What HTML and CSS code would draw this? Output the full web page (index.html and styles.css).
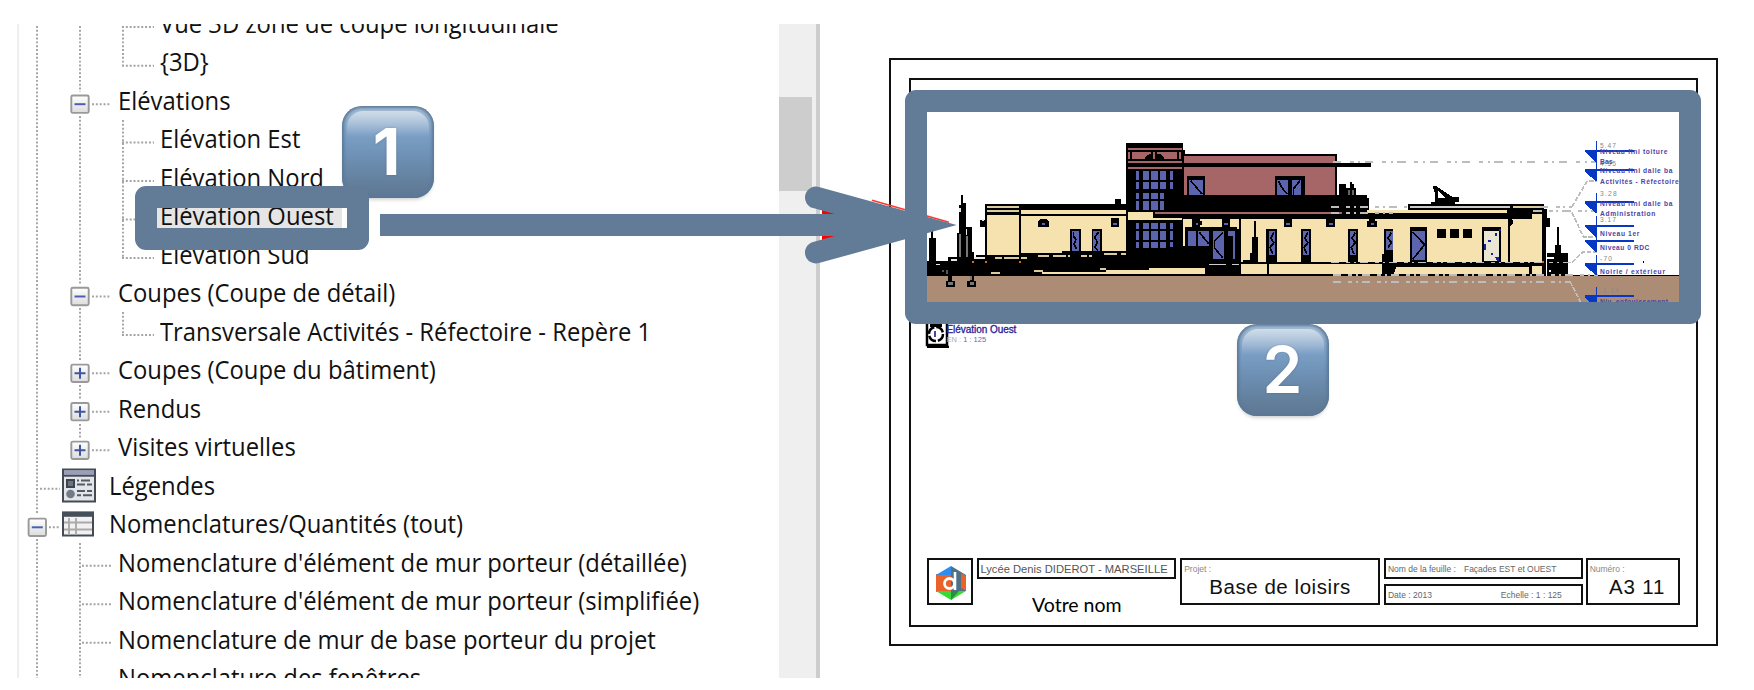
FILE: index.html
```
<!DOCTYPE html>
<html lang="fr">
<head>
<meta charset="utf-8">
<title>Mise en feuille d'une élévation</title>
<link rel="stylesheet" href="styles.css">
</head>
<body>
<main class="stage">
  <section class="browser">
    <svg class="guides" width="763" height="654" viewBox="17 24 763 654">
      <defs>
        <linearGradient id="boxFill" x1="0" y1="0" x2="0" y2="1"><stop offset="0" stop-color="#fff"/><stop offset="1" stop-color="#dcdcdc"/></linearGradient>
        <g id="box"><rect x="-8.7" y="-8.7" width="17.4" height="17.4" rx="1.5" fill="url(#boxFill)" stroke="#999" stroke-width="1.9"/></g>
        <g id="minus"><use href="#box"/><path d="M-5.5 0h11" stroke="#4a62ae" stroke-width="2"/></g>
        <g id="plus"><use href="#box"/><path d="M-5.5 0h11M0-5.5v11" stroke="#3f56a0" stroke-width="2"/></g>
      </defs>
      <path class="dots" d="M37 26V515M37 539V678M80 26V92M80 116V284M80 308V361M80 385V400M80 424V438M80 543V678M123 26V66M123 120V258M123 312V335M122 27H154M122 65.7H154M92 104.2H111M122 142.5H154M122 181H154M122 219.5H154M122 258H154M92 296.5H111M122 335H154M92 373.3H111M92 411.7H111M92 450.3H111M40 488.8H60M49 527.3H60M82 565.7H111M82 604.2H111M82 642.7H111"/>
      <use href="#minus" x="80" y="104.2"/><use href="#minus" x="80" y="296.5"/>
      <use href="#plus" x="80" y="373.3"/><use href="#plus" x="80" y="411.7"/><use href="#plus" x="80" y="450.3"/>
      <use href="#minus" x="37.3" y="527.3"/>
      <g>
        <rect x="63" y="469.5" width="32" height="32" fill="#e2e5e9" stroke="#454b55" stroke-width="2"/>
        <path d="M64 472.8H94" stroke="#9a9fb8" stroke-width="4.4"/><path d="M63 475.8H95" stroke="#454b55" stroke-width="1.8"/>
        <rect x="67" y="480" width="7" height="7" fill="#6b7480" stroke="#3e444d" stroke-width="2"/>
        <circle cx="70.5" cy="494" r="4.3" fill="#747b86"/>
        <path d="M77 480.5h2M81 480.5h9M77 484.5h8M87 484.5h5M77 491h8M87 491h5M77 495.3h4M83 495.3h9" stroke="#555b64" stroke-width="1.9"/>
      </g>
      <g>
        <rect x="63" y="512.5" width="30" height="23" fill="#f1f1f1" stroke="#454b55" stroke-width="2"/>
        <path d="M62 514.3H94" stroke="#454f5b" stroke-width="5"/>
        <path d="M64 522.5H92M64 529.5H92M69 518V535M76 518V535" stroke="#aaa" stroke-width="1.9"/>
      </g>
    </svg>
    <ul class="tree">
      <li class="row l3"><span>Vue 3D zone de coupe longitudinale</span></li>
      <li class="row l3"><span>{3D}</span></li>
      <li class="row l2"><span>Elévations</span></li>
      <li class="row l3"><span>Elévation Est</span></li>
      <li class="row l3"><span>Elévation Nord</span></li>
      <li class="row l3 selected"><span>Elévation Ouest</span></li>
      <li class="row l3"><span>Elévation Sud</span></li>
      <li class="row l2"><span>Coupes (Coupe de détail)</span></li>
      <li class="row l3"><span>Transversale Activités - Réfectoire - Repère 1</span></li>
      <li class="row l2"><span>Coupes (Coupe du bâtiment)</span></li>
      <li class="row l2"><span>Rendus</span></li>
      <li class="row l2"><span>Visites virtuelles</span></li>
      <li class="row l1"><span>Légendes</span></li>
      <li class="row l1"><span>Nomenclatures/Quantités (tout)</span></li>
      <li class="row l2"><span>Nomenclature d'élément de mur porteur (détaillée)</span></li>
      <li class="row l2"><span>Nomenclature d'élément de mur porteur (simplifiée)</span></li>
      <li class="row l2"><span>Nomenclature de mur de base porteur du projet</span></li>
      <li class="row l2"><span>Nomenclature des fenêtres</span></li>
    </ul>
    <div class="scrollbar"><div class="thumb"></div></div>
  </section>

  <section class="sheet">
    <div class="sheet-inner">
      <svg class="elevation" viewBox="21 -54 2256 570" shape-rendering="crispEdges">
        <rect x="21" y="438" width="2256" height="78" fill="#ad8c76"/>
        <!-- lower left wing -->
        <rect x="21" y="393" width="600" height="45"/>
        <rect x="195" y="221" width="425" height="180"/>
        <path fill="#f5e2ae" d="M201 255h96v119h-96zM303 258h314v104H425v8H303zM303 240h314v12H303z"/>
        <path fill="#dccb9c" d="M201 227h96v7h-96zM201 240h96v6h-96z"/>
        <path d="M585 208h18v15h-18zM181 270h14v20h-14zM355 290v-16l7-8h16l8 8v16zM572 290v-25h25v25zM451 298h31v70h-31zM515 298h30v70h-30z"/>
        <path fill="#5d64ae" d="M456 304h20v58h-20zM520 304h20v58h-20zM366 279h8v6h-8zM579 279h12v6h-12z"/>
        <path class="ink" d="M460 306v12l8 10-6 14 8 16M536 306l-12 16 8 14-8 16 10 10"/>
        <path fill="#dccb9c" d="M226 381h20v6h-20zM252 381h45v6h-45zM303 381h19v6h-19zM355 375h31v6h-31zM399 375h39v6h-39zM444 375h6v6h-6zM483 375h18v6h-18zM508 375h7v6h-7zM553 369h38v5h-38zM604 369h13v5h-13zM213 426h26v6h-26zM342 420h26v6h-26zM541 413h18v6h-18zM668 407h20v6h-20z"/>
        <!-- trees and footings on the left -->
        <path d="M27 393v-69h7v-20h5v20h8v69zM111 393v-83h6v-84h6v-32h6v26h8v72h18v74h6v27zM85 382h110v12H85zM168 375h30v12h-30zM84 436h13v16h7v18H78v-18h6zM149 436h12v16h7v18h-26v-18h7z"/>
        <path fill="#777" d="M117 311h6v70h-6zM137 318h7v62h-7zM85 457h14v7H85zM149 457h13v7h-13zM149 438h6v12h-6z"/>
        <path fill="#e8e8e8" d="M92 387h18v6H92zM47 401h12v5H47zM162 381h32v6h-32zM117 233h6v12h-6zM137 298h5v16h-5zM187 268h6v6h-6z"/>
        <path fill="#d96b10" d="M155 394h7v6h-7zM194 394h7v6h-7zM297 394h7v6h-7z"/>
        <path fill="#555" d="M65 419h6v8h-6zM78 420h7v12h-7z"/>
        <!-- stair tower -->
        <rect x="617" y="40" width="173" height="398"/>
        <path fill="#a66567" d="M624 54h161v6H624zM624 67h6v20h-6zM637 67h56v20h-56zM699 67h7v20h-7zM712 67h60v20h-60zM778 67h6v20h-6zM624 93h161v6H624zM624 112h161v6H624z"/>
        <path d="M676 87v-6l12-9h6v15zM712 87V72h8l12 9v6z"/>
        <path fill="#5d64ae" d="M648 124h8v26h-8zM668 124h19v26h-19zM693 124h20v26h-20zM719 124h20v26h-20zM751 124h7v26h-7zM648 156h8v20h-8zM668 156h19v20h-19zM693 156h20v20h-20zM719 156h20v20h-20zM751 156h7v20h-7zM648 189h8v18h-8zM668 189h19v18h-19zM693 189h20v18h-20zM719 189h14v18h-14zM648 214h8v25h-8zM668 214h19v25h-19zM693 214h20v25h-20zM719 214h14v25h-14z"/>
        <g transform="translate(720 0)">
          <!-- upper storey -->
          <path d="M70 60h6v13h454v125H70z"/>
          <path fill="#a66567" d="M73 79h452v20H73zM73 112h452v84H73z"/>
          <path d="M420 99h213v12H420zM70 99h400v13H70zM14 195h606v8h7v37h500v26H-20v-26h34z"/>
          <path fill="#a66567" d="M-14 246h560v6H-14z"/>
          <path d="M82 137h52v59H82zM345 137h90v59h-90z"/>
          <path fill="#5d64ae" d="M88 150h40v45H88zM352 150h32v45h-32zM397 150h26v45h-26z"/>
          <path class="ink" d="M92 152l34 40M355 152l10 20 16 20M420 152l-20 25v18"/>
          <path d="M538 196v-33h20v12h12v-20h6v8h6v12h7v21z"/>
          <path fill="#666" d="M565 181h5v14h-5zM577 181h5v14h-5z"/>
          <!-- ground floor wall -->
          <path d="M66 252h1089v186H66z"/>
          <path fill="#f5e2ae" d="M70 266h168v84H70zM243 266h902v129H243zM243 402h78v30h-78zM327 402h338v30H327z"/>
          <path d="M96 262h23v10h8v12h-8v8H96zM185 262h25v30h-25zM371 262h26v29h-26zM499 262h25v29h-25zM628 262h17v10h7v19h-31v-19h7zM76 291h154v6h8v141H76v-88h-10v-3h10z"/>
          <path fill="#5d64ae" d="M83 304h25v45H83zM115 304h32v45h-32zM160 304h31v82h-31zM204 304h20v82h-6v-69h-14zM108 279h6v6h-6zM191 279h13v5h-13zM378 279h12v6h-12zM506 279h12v6h-12zM634 279h7v6h-7z"/>
          <path class="ink" d="M118 307l28 34M188 308l-25 25v20l25 30"/>
          <path fill="#ccc" d="M147 401h51v5h-51zM217 401h20v5h-20z"/>
          <path d="M282 272h5v48h6v75h-43v-5h20v-20h6v-50h6z"/>
          <path d="M319 297h32v98h-32zM422 297h32v98h-32zM564 297h31v98h-31zM672 297h32v60h14v38h-6v18h-12l-10 22h-24v-63h6z"/>
          <path fill="#5d64ae" d="M327 304h18v71h-18zM429 304h19v71h-19zM571 304h18v71h-18zM678 304h20v56h-20z"/>
          <path class="ink" d="M342 308l-10 16 10 14-12 14 8 20M444 308l-10 16 10 14-12 14 8 20M586 308l-10 16 10 14-12 14 8 20M694 308l-10 16 10 14-10 14"/>
        </g>
        <!-- lower part of the tower and ramp -->
        <path fill="#f5e2ae" d="M624 246h76v19h85v6H624z"/>
        <path fill="#5d64ae" d="M648 279h8v18h-8zM668 279h19v18h-19zM693 279h20v18h-20zM719 279h20v18h-20zM751 279h7v18h-7zM648 304h8v25h-8zM668 304h19v25h-19zM693 304h20v25h-20zM719 304h20v25h-20zM751 304h7v25h-7zM648 336h8v18h-8zM668 336h19v19h-19zM693 336h20v19h-20zM719 336h20v19h-20zM751 336h7v14h-7z"/>
        <path fill="#f5e2ae" d="M366 426h192v-7h128v-6h168v19H366z"/>
        <g transform="translate(1440 0)">
          <!-- right wing -->
          <path d="M23 221h409v17h8v27h11v26h-13v147H-20V257H23z"/>
          <path fill="#ccc" d="M30 228h300v6H30z"/><path fill="#dccb9c" d="M340 228h86v6h-86z"/>
          <path fill="#f5e2ae" d="M-100 241H320v9H-100zM-20 266H324v129H-20zM331 266h64v-15h31v144H331zM-10 411H388v21H-20zM395 408h31v24h-31z"/>
          <path d="M30 291h51v104H30zM112 297h26v26h-26zM150 297h27v26h-27zM189 297h26v26h-26zM246 291h58v104h-58zM331 262l10 14-10 14z"/>
          <path fill="#5d64ae" d="M36 304h39v86H36z"/><path class="ink" d="M38 306l36 38-36 44"/>
          <path fill="#e9e6d3" d="M253 304h45v90h-45z"/>
          <path fill="#1522a0" d="M285 310h7v7h-7zM265 329h7v7h-7zM253 342h6v18h-6zM272 368h6v6h-6zM285 381h13v12h-7zM298 297h5v6h-5z"/>
          <path d="M92 221v-6h12l2-22-6-17v-7h10l48 32h18v14h-10v6z"/><path fill="#fff" d="M113 182l24 22h-22z"/>
          <path d="M440 438v-70h25v-24h6v-53h6v53h6v24h20v70z"/>
          <path fill="#fff" d="M440 380h22v6h-22zM446 420h6v5h-6z"/><path fill="#d96b10" d="M426 394h7v6h-7z"/>
          <path d="M503 434H837v5H503zM728 394h5v5h-5z"/>
        </g>
        <!-- level lines -->
        <g fill="none" stroke="#bdbdbd" stroke-width="5">
          <path stroke-dasharray="25 26 12 14 6 14" d="M1238 96H2030"/>
          <path stroke-dasharray="25 22 12 10 6 12" d="M1232 230H1460M1232 248H1420M1232 397H1960M1238 455H1950M1238 435H2035M1860 230H1956M1840 242H2030"/>
          <path stroke-dasharray="14 5" d="M1956 230L2002 153H2030M1956 248L1990 320H2030M1956 397L1990 365H2030M1950 455L1982 516"/>
        </g>
        <g fill="#0638c4">
          <path id="lv" d="M1995 60h147v6h-110v30h-5l-32-30zM2027 34h5v28h-5z"/>
          <use href="#lv" y="58"/><use href="#lv" y="154"/><use href="#lv" y="225"/><use href="#lv" y="269"/><use href="#lv" y="340"/><use href="#lv" y="436"/>
        </g>
        <g class="lv-value"><text x="2040" y="53" textLength="48">5.47</text><text x="2040" y="109" textLength="48">4.55</text><text x="2040" y="199" textLength="50">3.28</text><text x="2040" y="277" textLength="48">3.17</text><text x="2040" y="392" textLength="36">-70</text><text x="2040" y="488" textLength="56">-1.14</text></g>
        <g class="lv-name"><text x="2040" y="73" textLength="202">Niveau fini toiture</text><text x="2040" y="103" textLength="38">Bas</text><text x="2040" y="130" textLength="217">Niveau fini dalle ba</text><text x="2040" y="161" textLength="236">Activités - Réfectoire</text><text x="2040" y="227" textLength="217">Niveau fini dalle ba</text><text x="2040" y="258" textLength="166">Administration</text><text x="2040" y="317" textLength="118">Niveau 1er</text><text x="2040" y="361" textLength="148">Niveau 0 RDC</text><text x="2040" y="431" textLength="195">Noirie / extérieur</text><text x="2040" y="521" textLength="204">Niv. enfouissement</text></g>
      </svg>

      <div class="view-title">
        <svg width="24" height="25" viewBox="0 0 24 25"><path d="M2 1V22H22V1M2 24H24" fill="none" stroke="#000" stroke-width="2.5"/><circle cx="11" cy="11" r="7" fill="#fff" stroke="#000" stroke-width="2.5" stroke-dasharray="9 2"/><path d="M5 2h12" stroke="#000" stroke-width="4"/><path d="M10 8v6" stroke="#1a1a8c" stroke-width="1.6"/></svg>
        <div><p class="view-name">Elévation Ouest</p><p class="view-scale"><i>EN : </i>1 : 125</p></div>
      </div>

      <div class="title-block">
        <div class="cell logo">
          <svg width="32" height="36" viewBox="0 0 32 36">
            <path fill="#e8622a" d="M1 9h15v18H1z"/><path fill="#2f8df0" d="M16 1v9H1z"/><path fill="#4d7187" d="M16 1l15 9v16H16z"/><path fill="#e8622a" d="M26 8l5 3v15l-5-3z"/><path fill="#3bd936" d="M1 26h30L16 35z"/><path fill="#2c8950" d="M16 26h8l-8 9z"/>
            <path d="M20 7v18" stroke="#fff" stroke-width="2.6"/><circle cx="14.500" cy="18.500" r="5" fill="none" stroke="#fff" stroke-width="2.8"/>
          </svg>
        </div>
        <div class="owner">
          <div class="cell school"><span>Lycée Denis DIDEROT - MARSEILLE</span></div>
          <p class="author">Votre nom</p>
        </div>
        <div class="cell project"><span class="caption">Projet :</span><b>Base de loisirs</b></div>
        <div class="info">
          <div class="cell small"><span>Nom de la feuille :</span><span class="facade">Façades EST et OUEST</span></div>
          <div class="cell small"><span>Date : 2013</span><span class="echelle">Echelle : 1 : 125</span></div>
        </div>
        <div class="cell number"><span class="caption">Numéro :</span><b>A3 11</b></div>
      </div>
    </div>
  </section>

  <div class="key key-one">1</div>
  <div class="key key-two">2</div>
  <svg class="marks" width="1754" height="690" viewBox="0 0 1754 690">
    <path fill="#f00" d="M822 208L838 214.500H822zM822 242L838 235.500H822z"/>
    <path stroke="#ff3b30" stroke-width="1.600" d="M872 200.300L949 222.300"/>
    <g fill="none" stroke="#627b96" stroke-width="22">
      <rect x="146" y="197" width="212" height="42" stroke-linejoin="round"/>
      <rect x="916" y="101" width="774" height="212" stroke-linejoin="round"/>
      <path d="M380 225H925"/>
      <path stroke-linecap="round" d="M816 197.500L915.400 225L816 252.500"/>
    </g>
  </svg>
</main>
</body>
</html>
```
FILE: styles.css
```
* { box-sizing: border-box; }
body { margin: 0; background: #fff; }
p, ul { margin: 0; padding: 0; }
.stage { position: relative; display: flex; width: 1754px; height: 690px; overflow: hidden; padding: 24px 0 0 17px; }

/* project browser */
.browser { position: relative; display: flex; width: 803px; height: 654px; overflow: hidden; border-left: 2px solid #eee; border-right: 4px solid #cdcdcd; background: #fff; }
.guides { position: absolute; left: -2px; top: 0; }
.dots { fill: none; stroke: #a3a3a3; stroke-width: 1.9; stroke-dasharray: 1.95 1.9; }
.tree { flex: 1; list-style: none; margin-top: -20px; font: 25.5px/38.48px "Open Sans", sans-serif; color: #111; }
.row { position: relative; height: 38.48px; white-space: nowrap; }
.row span { display: inline-block; transform: scaleX(.934); transform-origin: 0 50%; }
.l1 { padding-left: 90px; }
.l2 { padding-left: 98.5px; }
.l3 { padding-left: 141px; }
.selected { background: linear-gradient(#e5e5e5, #e5e5e5) 138px 0 / 185px 100% no-repeat; }
.scrollbar { width: 37px; padding-top: 73px; background: #efefef; }
.thumb { width: 33px; height: 94px; background: #cdcdcd; }

/* drawing sheet */
.sheet { width: 829px; height: 588px; margin: 34px 0 0 68.500px; padding: 18px; border: 2px solid #111; }
.sheet-inner { height: 549px; border: 2px solid #111; padding: 32px 16px 0 17px; display: flex; flex-direction: column; }
.elevation { display: block; width: 752px; height: 190px; flex: none; margin-left: -.5px; }
.ink { fill: none; stroke: #000; stroke-width: 5; }
.lv-value { font: 20px "Liberation Sans", sans-serif; fill: #888; }
.lv-name { font: 700 20px "Liberation Sans", sans-serif; fill: #4a44a6; }
.view-title { display: flex; height: 50px; margin: 21px 0 0 -3px; font-family: "Liberation Sans", sans-serif; }
.view-name { margin-left: -2px; font-size: 10px; line-height: 13px; letter-spacing: -.05px; color: #2a2296; -webkit-text-stroke: .3px #2a2296; }
.view-scale { margin-left: -2px; font-size: 7.5px; line-height: 7px; color: #6b66b4; }
.view-scale i { font-style: normal; color: #aaa; }

.title-block { display: flex; height: 47px; margin: 185px 0 0 -1px; font-family: "Liberation Sans", sans-serif; color: #111; white-space: nowrap; }
.cell { border: 2px solid #111; }
.logo { width: 47px; padding: 5px 0 0 6px; }
.owner { width: 199px; margin-left: 4px; }
.school { height: 21px; padding-left: 1px; font-size: 11.2px; line-height: 18px; color: #555; }
.author { margin-top: 13px; text-align: center; font: 19.5px/26px Lato, sans-serif; color: #000; }
.project { width: 200px; margin-left: 4px; }
.number { width: 94px; margin-left: 3px; }
.caption { display: block; height: 13px; padding-left: 2px; font-size: 8.5px; line-height: 18px; color: #888; }
.project b, .number b { display: block; text-align: center; font-weight: 400; font-size: 20.5px; line-height: 27px; letter-spacing: .55px; }
.number b { padding-left: 9px; letter-spacing: .8px; }
.info { width: 199px; margin-left: 4px; display: flex; flex-direction: column; justify-content: space-between; }
.small { display: flex; height: 21px; padding-left: 2px; font-size: 8.5px; line-height: 18px; color: #666; }
.facade { margin-left: 8px; }
.echelle { margin-left: 69px; }

/* numbered keys and arrows */
.key { position: absolute; width: 92px; height: 92px; border-radius: 20px; background: linear-gradient(#a9c0d6, #7c9fc6 30%, #7093b8 50%, #627e9b 85%, #5e7893); box-shadow: inset 0 0 3px 2px #5b7896, 0 3px 4px -2px rgba(0, 0, 0, .25); font: 600 64px/92px Inter, sans-serif; color: #fff; text-align: center; text-shadow: 0 0 2px rgba(60, 80, 100, .5); }
.key::before { content: ""; position: absolute; left: 5px; right: 5px; top: 5px; height: 26px; border-radius: 16px 16px 0 0; background: linear-gradient(rgba(255, 255, 255, .5), rgba(255, 255, 255, 0)); }
.key-one { left: 342px; top: 106px; padding-right: 3px; font-weight: 700; }
.key-two { left: 1236.500px; top: 324px; }
.marks { position: absolute; left: 0; top: 0; }
```
